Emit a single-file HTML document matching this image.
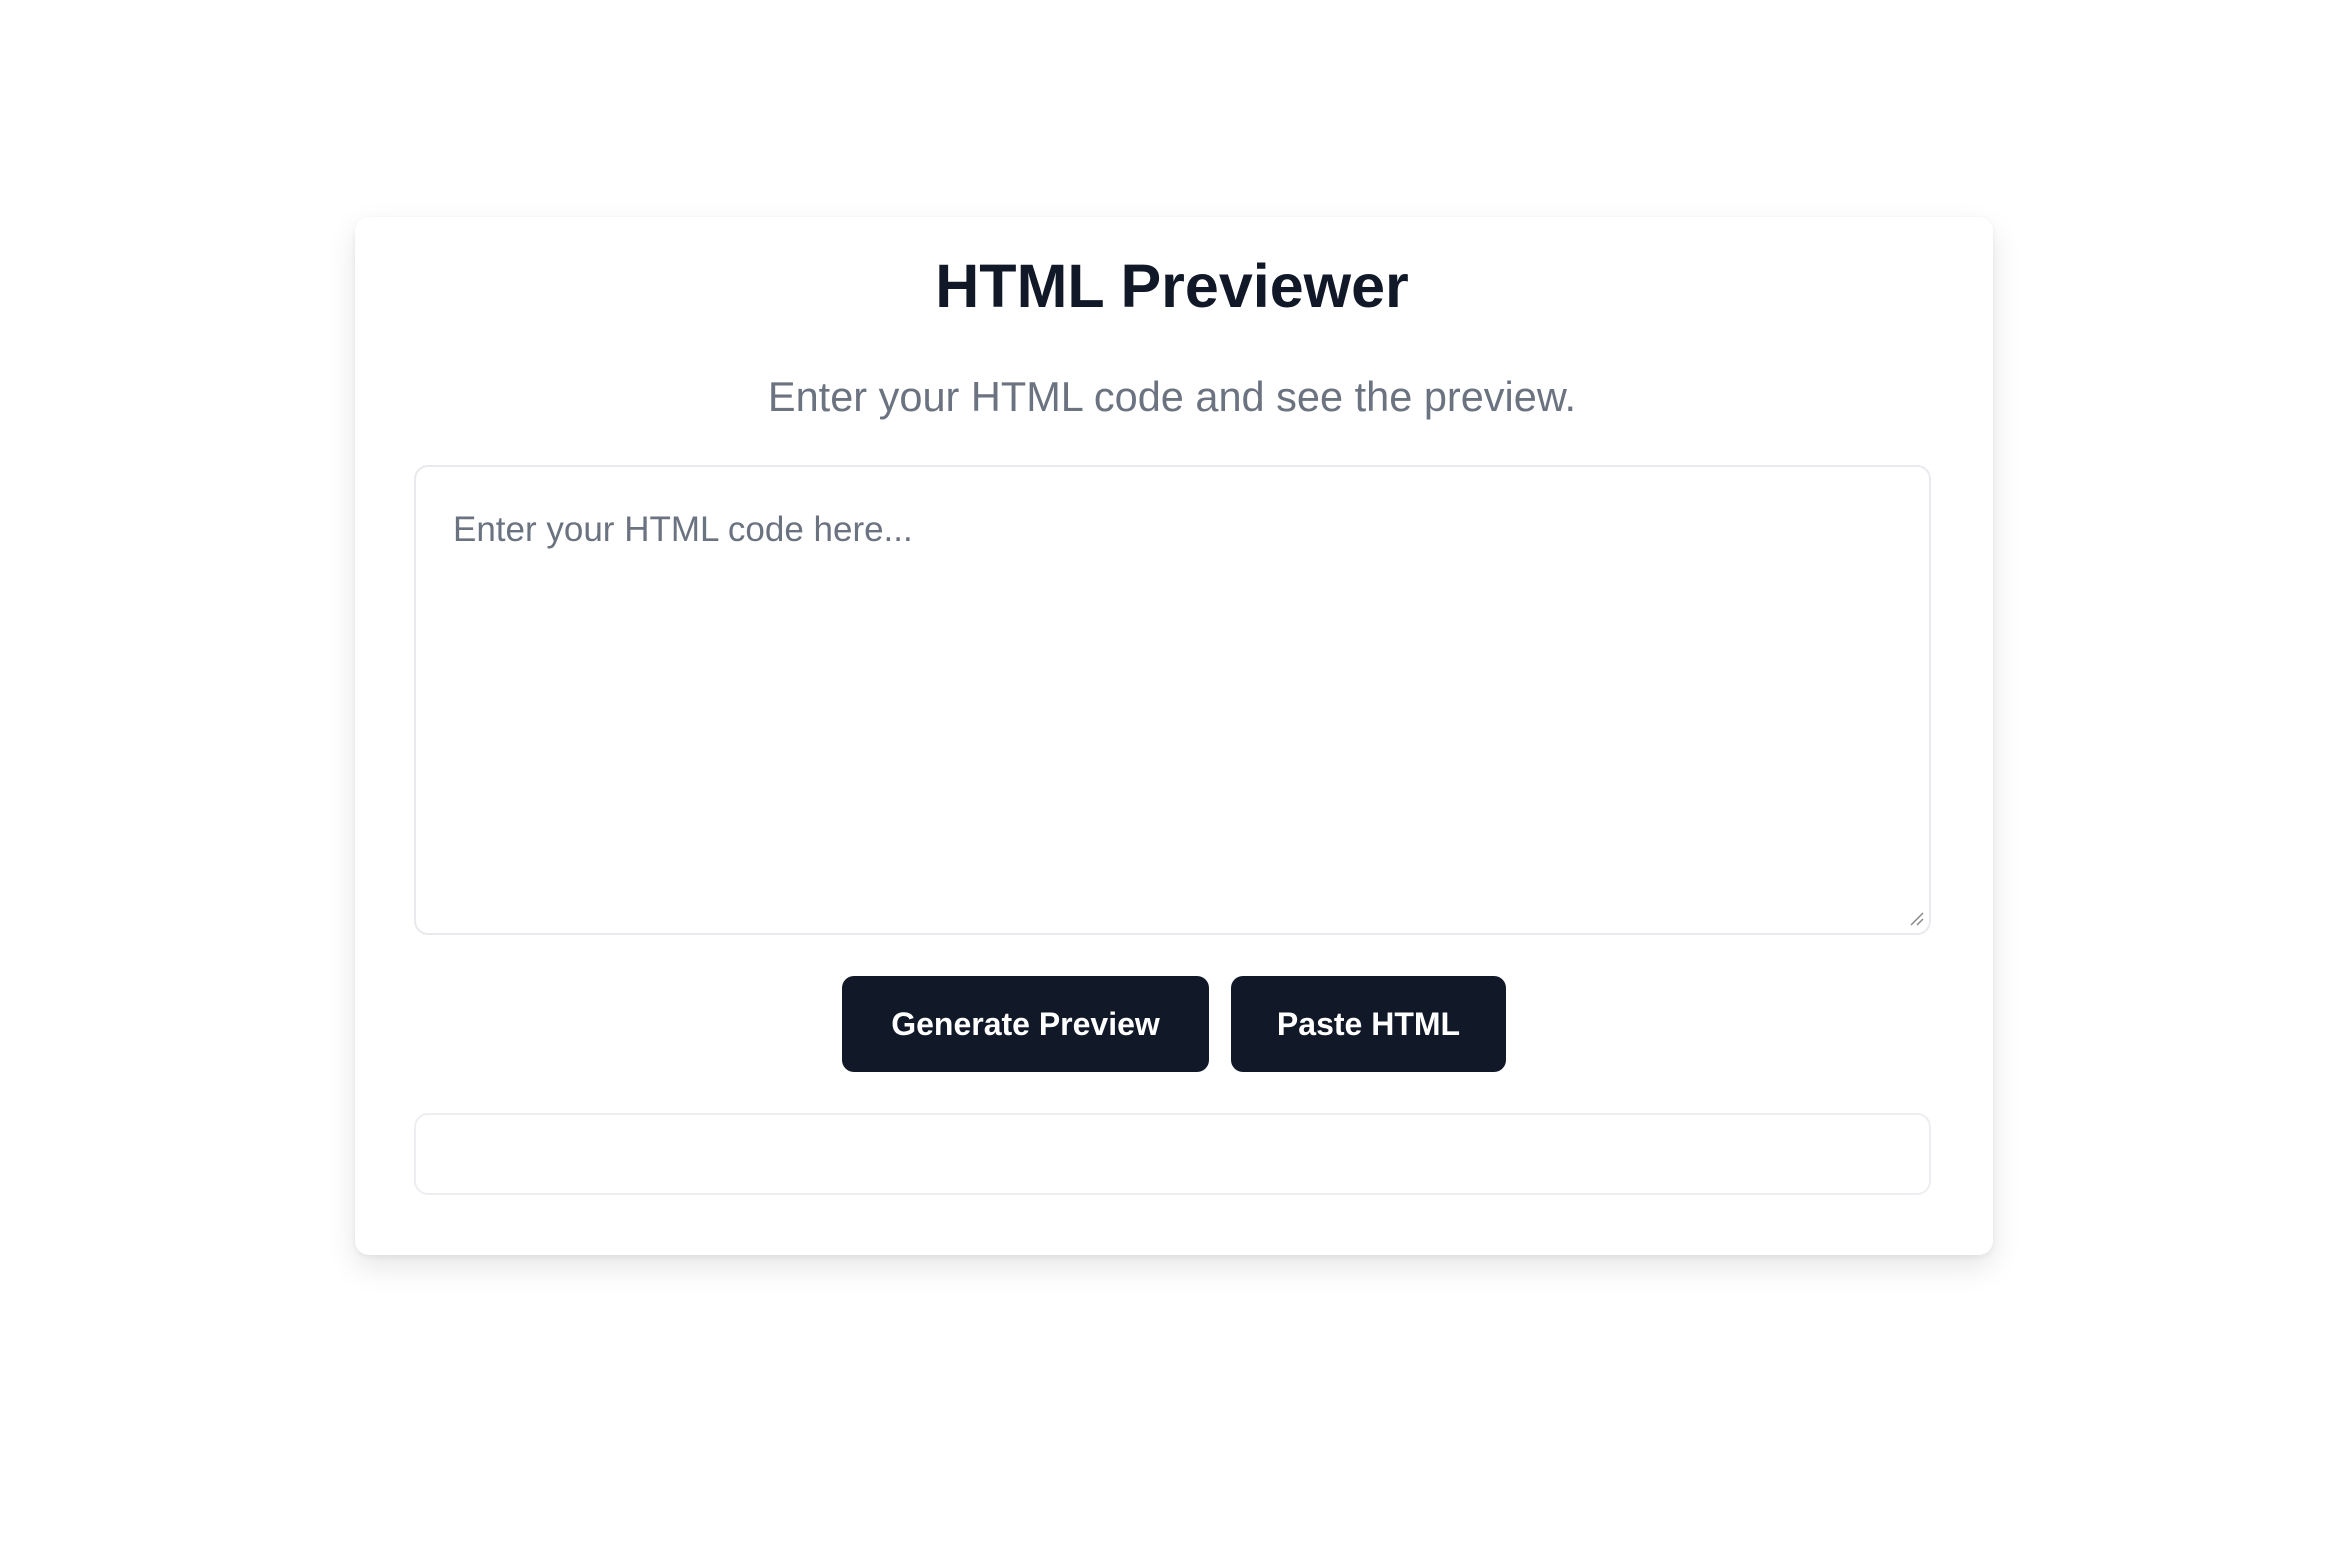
<!DOCTYPE html>
<html><head><meta charset="utf-8"><style>
html,body{margin:0;padding:0;background:#fff;width:2344px;height:1563px;overflow:hidden;font-family:"Liberation Sans",sans-serif}
.card{position:absolute;left:355px;top:217px;width:1638px;height:1038px;background:#fff;border-radius:14px;box-shadow:0 12px 30px rgba(0,0,0,0.10),0 2px 6px rgba(0,0,0,0.06)}
h1{position:absolute;left:0;right:0;top:250px;margin:0;text-align:center;font-size:61px;font-weight:bold;color:#111827;line-height:72px}
.sub{position:absolute;left:0;right:0;top:372px;text-align:center;font-size:41.5px;color:#6b7280;line-height:50px}
.ta{position:absolute;left:414px;top:465px;width:1517px;height:470px;border:2px solid #e8eaee;border-radius:14px;box-sizing:border-box}
.ph{position:absolute;left:453px;top:508px;font-size:35px;color:#6b7280;line-height:44px}
.rs{position:absolute;left:1908px;top:910px;width:16px;height:16px}
.btn{position:absolute;top:976px;height:96px;background:#111827;color:#fff;border-radius:12px;font-weight:bold;font-size:32px;line-height:96px;text-align:center}
.box{position:absolute;left:414px;top:1113px;width:1517px;height:82px;border:2px solid #eceef1;border-radius:14px;box-sizing:border-box}
</style></head><body>
<div class="card"></div>
<h1>HTML Previewer</h1>
<div class="sub">Enter your HTML code and see the preview.</div>
<div class="ta"></div>
<div class="ph">Enter your HTML code here...</div>
<svg class="rs" viewBox="0 0 16 16"><path d="M15 3L3 15M15 9L9 15" stroke="#888" stroke-width="1.5"/></svg>
<div class="btn" style="left:842px;width:367px">Generate Preview</div>
<div class="btn" style="left:1231px;width:275px">Paste HTML</div>
<div class="box"></div>
</body></html>
